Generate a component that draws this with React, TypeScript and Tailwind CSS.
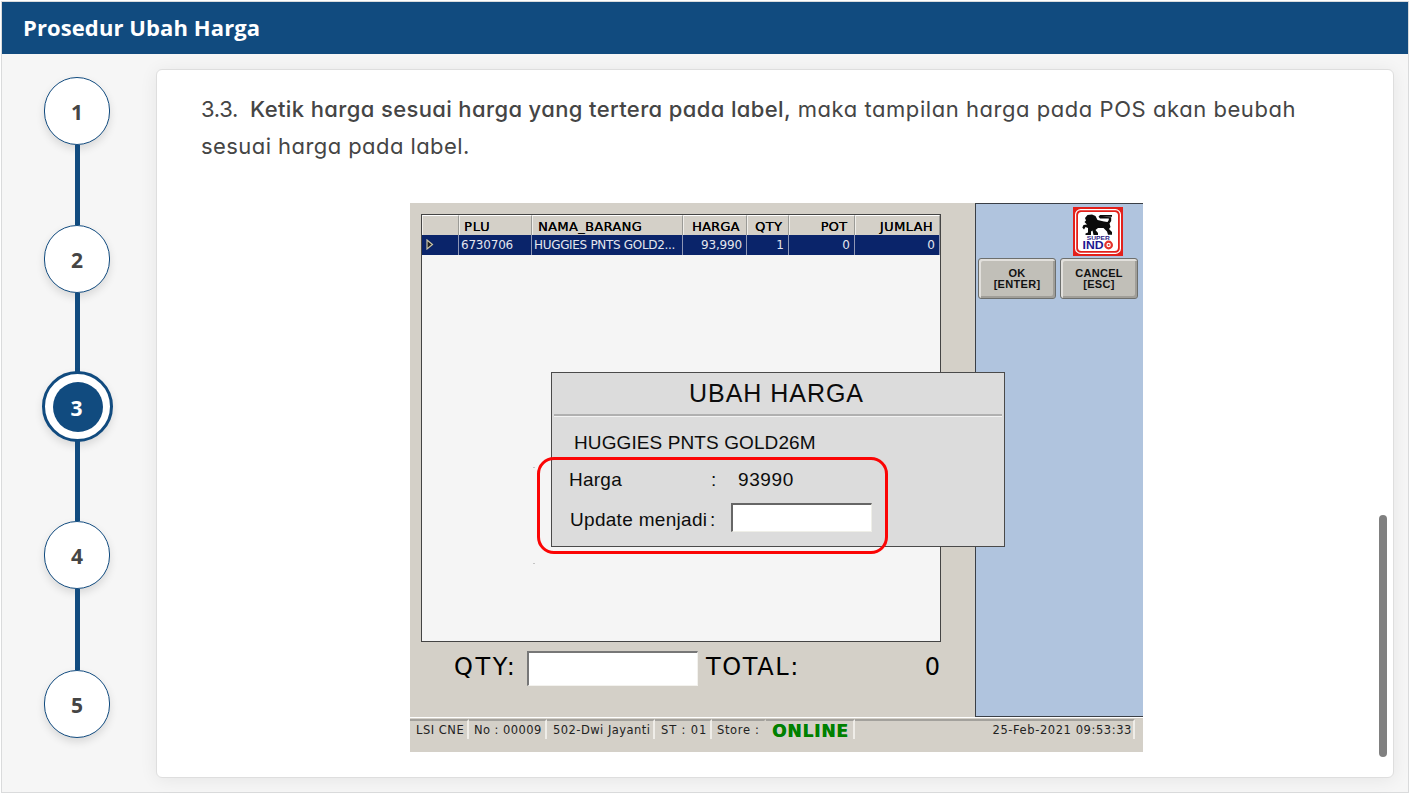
import type { ReactNode } from "react";

function Step({ n, active }: { n: number; active?: boolean }) {
  if (active) {
    return (
      <div className="-my-[2px] flex h-[71px] w-[71px] shrink-0 items-center justify-center rounded-full border-[3px] border-[#114b7f] bg-white shadow-[0_4px_8px_rgba(0,0,0,0.12)]">
        <div className="flex h-[50px] w-[50px] items-center justify-center rounded-full bg-[#114b7f] pt-[4px] pr-[2px] text-[21px] font-bold text-white">{n}</div>
      </div>
    );
  }
  return (
    <div className="mr-px flex h-[68px] w-[66px] shrink-0 items-center justify-center rounded-full border-[1.5px] border-[#114b7f] bg-white pt-[4px] text-[21px] font-bold text-[#454545] shadow-[0_4px_8px_rgba(0,0,0,0.12)]">
      {n}
    </div>
  );
}

function Link({ h }: { h: string }) {
  return <div className={`w-[4.5px] shrink-0 bg-[#114b7f] ${h}`} />;
}

const COLS = "grid grid-cols-[37px_73px_151px_64px_42px_66px_1fr]";

function Head({ children, className = "" }: { children?: ReactNode; className?: string }) {
  return (
    <div className={`overflow-hidden border-t border-r border-l border-t-white border-r-[#9a9a96] border-l-[#f0eeea] text-[13px] leading-[21px] whitespace-nowrap text-black [text-shadow:0.2px_0_0_#000] ${className}`}>
      {children}
    </div>
  );
}

function Cell({ children, className = "" }: { children?: ReactNode; className?: string }) {
  return (
    <div className={`overflow-hidden border-r border-[#8f97b5] text-[12px] leading-[21px] whitespace-nowrap text-[#e4e6ee] ${className}`}>
      {children}
    </div>
  );
}

function Status({ children, className = "" }: { children?: ReactNode; className?: string }) {
  return (
    <div className={`h-[20px] shrink-0 border-t-2 border-r-2 border-t-[#a3a19c] border-r-[#efede8] text-[11.5px] leading-[18px] whitespace-nowrap text-[#222] ${className}`}>
      {children}
    </div>
  );
}

function PosButton({ top, bottom }: { top: string; bottom: string }) {
  return (
    <div className="flex h-[41px] w-[78px] flex-col items-center justify-center rounded-[3px] border border-[#6d6f6d] bg-[#c1bfb8] font-['Liberation_Sans',Arial,sans-serif] text-[11px] leading-[11px] font-bold tracking-[0.3px] text-[#111] shadow-[inset_2px_2px_0_#e2e0dc,inset_-2px_-2px_0_#a09e98]">
      <span>{top}</span>
      <span>{bottom}</span>
    </div>
  );
}

function Logo() {
  return (
    <svg width="50" height="49" viewBox="0 0 50 49">
      <rect width="50" height="49" fill="#e3201b" />
      <rect x="2.6" y="2.6" width="44.8" height="43.8" rx="5" fill="none" stroke="#fff" strokeWidth="1.2" />
      <rect x="5" y="5" width="40" height="39" rx="3.5" fill="#fff" />
      <path
        fill="#0b0b0b"
        d="M12 11 L14.500 8 L19 7.500 L22.500 9 L24.500 13 L31 14.500 L34.500 15 L35.800 13 L35.800 11.500 L27 11.500 L25.500 9.800 L27 8 L39 8 L39 9.800 L29 9.800 L38.200 10.200 L38.200 14 L36.500 16.500 L37.500 20 L36 22 L39 25 L39 27.800 L35 27.800 L34 24.500 L30.500 21 L25 21 L22.500 23 L25 26 L25 28 L20.500 28 L19.500 23.500 L18 24.500 L18 28 L12.500 28 L12.500 26.500 L15 25.500 L15 21 L12.500 20 L11 22.500 L9.300 20.500 L10.500 18 L14 17.500 L11.500 15 L13 13.500 Z"
      />
      <text x="25.300" y="32.800" textAnchor="middle" textLength="23" lengthAdjust="spacingAndGlyphs" fontFamily="Liberation Sans, sans-serif" fontWeight="700" fontSize="6" fill="#2b1c86">SUPER</text>
      <text x="9.500" y="42" textLength="21" lengthAdjust="spacingAndGlyphs" fontFamily="Liberation Sans, sans-serif" fontWeight="700" fontSize="11.500" fill="#1c1690">IND</text>
      <circle cx="35.600" cy="38" r="3.300" fill="#fff" stroke="#e3322c" strokeWidth="2.200" />
      <circle cx="35.600" cy="38" r="1" fill="#e3322c" />
    </svg>
  );
}

function Dialog() {
  return (
    <div className="absolute top-[169px] left-[141px] h-[175px] w-[454px] border border-[#4a4a4a] bg-[#dcdcdc] font-['Liberation_Sans',Arial,sans-serif] text-[#0c0c0c]">
      <div className="mx-[2px] flex h-[43px] items-center justify-center border-b-2 border-b-[#b0b0b0] pr-[3px] text-[25px] tracking-[0.95px] whitespace-nowrap shadow-[0_1px_0_#f3f3f3]">
        UBAH HARGA
      </div>
      <div className="pt-[15px] pl-[22px] text-[19px] leading-[24px] tracking-[0.1px] whitespace-nowrap">HUGGIES PNTS GOLD26M</div>
      <div className="flex pt-[13px] pl-[17px] text-[19px] leading-[24px]">
        <span className="w-[142px] tracking-[0.25px]">Harga</span>
        <span className="w-[27px]">:</span>
        <span className="tracking-[0.6px]">93990</span>
      </div>
      <div className="flex pt-[11px] pl-[18px] text-[19px] leading-[34px]">
        <span className="w-[140px] tracking-[0.3px] whitespace-nowrap">Update menjadi</span>
        <span className="w-[21px]">:</span>
        <div className="h-[29px] w-[141px] border-t-2 border-r border-b border-l-2 border-t-[#666] border-r-[#efefe8] border-b-[#efefe8] border-l-[#666] bg-white" />
      </div>
    </div>
  );
}

function PosScreen() {
  return (
    <div className="relative h-[549px] w-[733px] bg-[#d4d0c8] font-['DejaVu_Sans',Verdana,sans-serif]">
      <div className="flex h-[514px]">
        <div className="w-[565px] pt-[11px] pl-[11px]">
          <div className="h-[428px] w-[520px] border border-[#444] bg-[#f5f5f5]">
            <div className={`${COLS} h-[20px] bg-[#d4d0c8]`}>
              <Head />
              <Head className="pl-[4px] tracking-[0.8px]">PLU</Head>
              <Head className="pl-[5px] tracking-[0.35px]">NAMA_BARANG</Head>
              <Head className="pl-[8px] tracking-[0.2px]">HARGA</Head>
              <Head className="pl-[7px] tracking-[0.4px]">QTY</Head>
              <Head className="pr-[7px] text-right tracking-[0.1px]">POT</Head>
              <Head className="pr-[6px] text-right tracking-[0.4px]">JUMLAH</Head>
            </div>
            <div className={`${COLS} h-[20px] bg-[#0a246a]`}>
              <Cell className="pt-[4px] pl-[4px]">
                <svg width="8" height="11" viewBox="0 0 8 11">
                  <path d="M1 1 L6.500 5.500 L1 10 Z" fill="#222" stroke="#c9c4a8" strokeWidth="1.200" />
                </svg>
              </Cell>
              <Cell className="pl-[2px] tracking-[-0.2px]">6730706</Cell>
              <Cell className="pl-[2px] tracking-[-0.32px]">HUGGIES PNTS GOLD2...</Cell>
              <Cell className="pr-[4px] text-right tracking-[-0.15px]">93,990</Cell>
              <Cell className="pr-[4px] text-right">1</Cell>
              <Cell className="pr-[4px] text-right">0</Cell>
              <Cell className="pr-[4px] text-right">0</Cell>
            </div>
          </div>
          <div className="mt-[8px] flex h-[36px] items-center text-[24px] leading-[30px] text-black">
            <span className="w-[106px] pb-[2px] pl-[33px] tracking-[2.6px]">QTY:</span>
            <div className="h-[35px] w-[171px] border-t-2 border-r border-b border-l-2 border-t-[#777] border-r-[#f3f2ee] border-b-[#f3f2ee] border-l-[#777] bg-white" />
            <span className="w-[199px] pb-[2px] pl-[8px] tracking-[1.6px]">TOTAL:</span>
            <span className="w-[43px] pb-[2px] text-right">0</span>
          </div>
        </div>
        <div className="w-[168px] border-t border-b border-l border-[#3a3f46] bg-[#b0c4de]">
          <div className="flex justify-end pt-[3px] pr-[20px]">
            <Logo />
          </div>
          <div className="flex gap-[4px] pt-[2px] pl-[2px]">
            <PosButton top="OK" bottom="[ENTER]" />
            <PosButton top="CANCEL" bottom="[ESC]" />
          </div>
        </div>
      </div>
      <div className="flex h-[35px] border-t border-white pt-[1px]">
        <Status className="w-[59px] pl-[6px] tracking-[0.5px]">LSI CNE</Status>
        <Status className="w-[78px] pl-[5px] tracking-[0.43px]">No : 00009</Status>
        <Status className="w-[108px] pl-[6px] tracking-[0.46px]">502-Dwi Jayanti</Status>
        <Status className="w-[57px] pl-[6px] tracking-[0.85px]">ST : 01</Status>
        <Status className="w-[54px] border-r-transparent pl-[5px] tracking-[0.65px]">Store :</Status>
        <Status className="w-[89px] pl-[6px] text-[17px]! leading-[20px]! font-bold tracking-[0.85px] text-[#008000]! [text-shadow:0.4px_0_0_#008000]">ONLINE</Status>
        <Status className="w-[280px] pr-[1px] text-right tracking-[0.58px]">25-Feb-2021 09:53:33</Status>
      </div>
      <Dialog />
      <div className="absolute top-[254px] left-[127px] h-[97px] w-[351px] rounded-[17px] border-3 border-[#fb0505]" />
      <div className="absolute top-[264px] left-[123px] h-px w-[2px] bg-[#c4c4c4]" />
      <div className="absolute top-[360px] left-[123px] h-px w-[2px] bg-[#c4c4c4]" />
    </div>
  );
}

export default function App() {
  return (
    <div className="h-[794px] w-[1410px] bg-white p-px font-['Open_Sans','Noto_Sans',sans-serif]">
      <div className="flex h-[792px] w-[1408px] flex-col border border-[#dadbdc] bg-[#f6f6f6]">
        <header className="flex h-[52px] shrink-0 items-center bg-[#114b7f] pb-[2px] pl-[21px] text-[22px] font-bold tracking-[0.1px] text-white">
          Prosedur Ubah Harga
        </header>
        <div className="flex min-h-0 flex-1">
          <nav className="flex w-[151px] shrink-0 flex-col items-center pt-[23px]">
            <Step n={1} />
            <Link h="h-[80px]" />
            <Step n={2} />
            <Link h="h-[80px]" />
            <Step n={3} active />
            <Link h="h-[81px]" />
            <Step n={4} />
            <Link h="h-[81px]" />
            <Step n={5} />
          </nav>
          <main className="relative mt-[15px] ml-[3px] h-[709px] w-[1238px] rounded-[6px] border border-[#dedede] bg-white shadow-[0_2px_18px_rgba(0,0,0,0.07)]">
            <p className="pt-[21px] pl-[44px] font-['Inter',sans-serif] text-[22px] leading-[37px] text-[#454545] [font-feature-settings:'cv11']">
              <span className="tracking-[-0.3px]">3.3.</span>
              <span className="ml-[12px] font-medium tracking-[0.37px]">Ketik harga sesuai harga yang tertera pada label,</span>
              <span className="tracking-[0.55px]"> maka tampilan harga pada POS akan beubah</span>
              <br />
              <span className="tracking-[0.43px]">sesuai harga pada label.</span>
            </p>
            <div className="mt-[38px] ml-[253px]">
              <PosScreen />
            </div>
            <div className="absolute top-[445px] right-[6px] h-[242px] w-[8px] rounded-full bg-[#808080]" />
          </main>
        </div>
      </div>
    </div>
  );
}
